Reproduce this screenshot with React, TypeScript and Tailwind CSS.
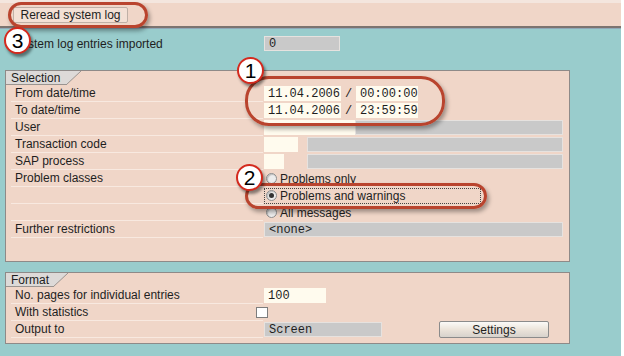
import React from "react";

const sans = "font-['Liberation_Sans',Arial,sans-serif]";
const mono = "font-['Liberation_Mono','Courier_New',monospace]";

const Field = ({
  w,
  value,
  tone = "gray",
}: {
  w: string;
  value?: string;
  tone?: "gray" | "cream";
}) => (
  <div
    className={`${w} h-[15px] flex items-center pl-[4px] text-[12px] leading-none ${mono} ${
      tone === "gray"
        ? "bg-[#c9c9c9] border border-[#e6e2df]"
        : "bg-[#fffbee]"
    }`}
  >
    {value}
  </div>
);

const Tab = ({ label, w }: { label: string; w: string }) => (
  <div className="flex h-[14px]">
    <div
      className={`${w} bg-[#dddad8] border-b border-[#9a9490] pl-[5px] flex items-center text-[12px] leading-none`}
    >
      {label}
    </div>
    <svg width="15" height="14" viewBox="0 0 15 14" className="block">
      <polygon points="0,0 15,0 0,14" fill="#dddad8" />
      <line x1="15" y1="0" x2="0" y2="14" stroke="#9a9490" strokeWidth="1" />
      <line x1="0" y1="13.5" x2="1" y2="13.5" stroke="#9a9490" />
    </svg>
  </div>
);

const Row = ({
  label,
  children,
}: {
  label?: string;
  children?: React.ReactNode;
}) => (
  <div className="flex items-center h-[17px]">
    <div className="w-[252px] ml-[5px] h-[17px] pl-[4px] flex items-center border-b border-[#f8e9e0]">
      {label}
    </div>
    <div className="flex items-center gap-0 ml-[1px]">{children}</div>
  </div>
);

const Radio = ({ on }: { on?: boolean }) => (
  <span className="w-[11px] h-[11px] rounded-full border border-[#8d8d8d] bg-[#ececec] flex items-center justify-center shadow-[inset_1px_1px_1px_rgba(0,0,0,0.2)]">
    {on && <span className="w-[5px] h-[5px] rounded-full bg-[#333]" />}
  </span>
);

const Badge = ({ n, className }: { n: string; className: string }) => (
  <div
    className={`absolute w-[27px] h-[27px] rounded-full bg-white border-[2px] border-[#d42a1e] shadow-[2px_3px_3px_rgba(0,0,0,0.45)] flex items-center justify-center text-[21px] leading-none text-black ${className}`}
  >
    {n}
  </div>
);

export default function App() {
  return (
    <div
      className={`relative w-[624px] h-[356px] overflow-hidden bg-white text-[12px] text-[#1e1e1e] ${sans}`}
    >
      <div className="w-[621px] h-full flex flex-col">
        {/* toolbar */}
        <div className="h-[28px] bg-[#f0d6c8] border-t-[3px] border-t-[#f4e6de] border-b-[2px] border-b-[#7d7470] flex items-center pl-[13px]">
          <div className="h-[16px] w-[115px] bg-[#f3e0d5] border border-[#bfb0a6] rounded-[2px] flex items-center justify-center text-[12px] leading-none">
            Reread system log
          </div>
        </div>

        <div className="flex-1 bg-[#99cccc] border-t border-[#8fa9b8]">
          {/* imported count */}
          <div className="flex items-center h-[15px] mt-[7px]">
            <div className="w-[264px] pl-[14px]">System log entries imported</div>
            <Field w="w-[76px]" value="0" />
          </div>

          {/* Selection */}
          <div className="ml-[5px] mt-[19px] w-[565px] h-[192px] bg-[#f0d6c8] border border-[#8e8a88]">
            <Tab label="Selection" w="w-[60px]" />
            <Row label="From date/time">
              <div className="flex items-center">
                <Field w="w-[77px]" value="11.04.2006" tone="cream" />
                <span className={`w-[15px] text-center ${mono}`}>/</span>
                <Field w="w-[62px]" value="00:00:00" tone="cream" />
              </div>
            </Row>
            <Row label="To date/time">
              <div className="flex items-center">
                <Field w="w-[77px]" value="11.04.2006" tone="cream" />
                <span className={`w-[15px] text-center ${mono}`}>/</span>
                <Field w="w-[62px]" value="23:59:59" tone="cream" />
              </div>
            </Row>
            <Row label="User">
              <Field w="w-[91px]" tone="cream" />
              <Field w="w-[208px]" />
            </Row>
            <Row label="Transaction code">
              <Field w="w-[34px]" tone="cream" />
              <div className="w-[9px]" />
              <Field w="w-[256px]" />
            </Row>
            <Row label="SAP process">
              <Field w="w-[20px]" tone="cream" />
              <div className="w-[23px]" />
              <Field w="w-[256px]" />
            </Row>
            <Row label="Problem classes">
              <div className="flex items-center gap-[3px] pl-[2px]">
                <Radio />
                <span>Problems only</span>
              </div>
            </Row>
            <Row>
              <div className="flex items-center gap-[3px] pl-[1px] w-[217px] h-[16px] border border-dotted border-[#444]">
                <Radio on />
                <span>Problems and warnings</span>
              </div>
            </Row>
            <Row>
              <div className="flex items-center gap-[3px] pl-[2px]">
                <Radio />
                <span>All messages</span>
              </div>
            </Row>
            <Row label="Further restrictions">
              <Field w="w-[299px]" value="<none>" />
            </Row>
          </div>

          {/* Format */}
          <div className="ml-[5px] mt-[10px] w-[565px] h-[72px] bg-[#f0d6c8] border border-[#8e8a88]">
            <Tab label="Format" w="w-[47px]" />
            <Row label="No. pages for individual entries">
              <Field w="w-[62px]" value="100" tone="cream" />
            </Row>
            <Row label="With statistics">
              <span className="-ml-[8px] w-[12px] h-[11px] bg-white border border-[#7d7d7d]" />
            </Row>
            <Row label="Output to">
              <Field w="w-[118px]" value="Screen" />
              <div className="w-[57px]" />
              <div className="w-[110px] h-[17px] rounded-[2px] border border-[#8b8b8b] bg-gradient-to-b from-[#fbfaf8] via-[#ece4da] to-[#d7d2cc] flex items-center justify-center">
                Settings
              </div>
            </Row>
          </div>
        </div>
      </div>

      {/* annotations */}
      <div className="absolute left-[8px] top-[2px] w-[140px] h-[26px] rounded-full border-[3px] border-[#b9442e] shadow-[2px_3px_4px_rgba(0,0,0,0.35)]" />
      <div className="absolute left-[245px] top-[76px] w-[200px] h-[50px] rounded-[24px] border-[3px] border-[#b9442e] shadow-[2px_3px_4px_rgba(0,0,0,0.35)]" />
      <div className="absolute left-[245px] top-[183px] w-[242px] h-[26px] rounded-full border-[3px] border-[#b9442e] shadow-[2px_3px_4px_rgba(0,0,0,0.35)]" />
      <Badge n="3" className="left-[4px] top-[27px]" />
      <Badge n="1" className="left-[237px] top-[57px]" />
      <Badge n="2" className="left-[236px] top-[164px]" />
    </div>
  );
}
